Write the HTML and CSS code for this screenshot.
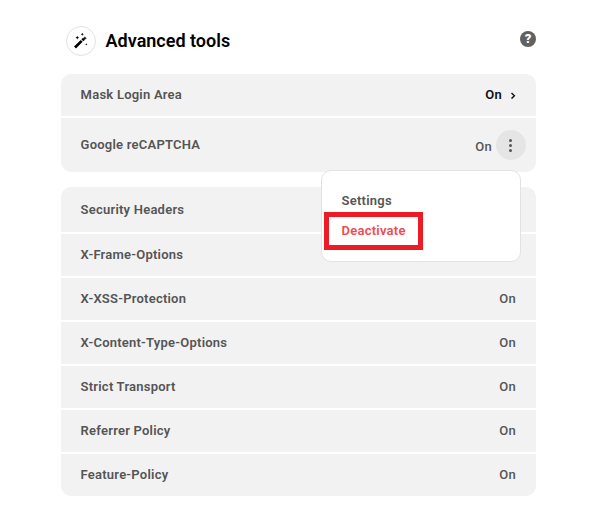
FILE: index.html
```html
<!DOCTYPE html>
<html lang="en">
<head>
<meta charset="utf-8">
<title>Advanced tools</title>
<link rel="stylesheet" href="styles.css">
</head>
<body>
<main class="panel">
  <header class="header">
    <span class="badge">
      <svg class="wand" width="16" height="18" viewBox="0 0 16 18"><path class="stick" d="M2 15.500 8.700 8.900M9.300 8.300 11 6.700"/><path d="M4.300 3.800l.6 1.300 1.300.6-1.300.6-.6 1.300-.6-1.300-1.300-.6 1.300-.6zM9.300.8l.5 1 1 .5-1 .5-.5 1-.5-1-1-.5 1-.5zM11.900 4.200l.6 1.400 1.400.6-1.400.6-.6 1.400-.6-1.400-1.400-.6 1.400-.6zM13.300 11.200l.35.750.75.350-.75.350-.35.750-.35-.75-.75-.35.750-.35z"/></svg>
    </span>
    <h1 class="title">Advanced tools</h1>
    <span class="help">?</span>
  </header>
  <section class="group">
    <div class="row">Mask Login Area
      <span class="state strong">On <svg class="chevron" width="6" height="8" viewBox="0 0 6 8"><path d="M1.500 2l2.900 2.800L1.500 7.600"/></svg></span>
    </div>
    <div class="row tall">Google reCAPTCHA
      <span class="state with-menu"><span class="lowered">On</span>
        <span class="more"><i></i><i></i><i></i></span>
      </span>
      <div class="menu"><span>Settings</span><span class="danger">Deactivate</span></div>
    </div>
  </section>
  <section class="group">
    <div class="row head">Security Headers</div>
    <div class="row">X-Frame-Options</div>
    <div class="row">X-XSS-Protection<span class="state">On</span></div>
    <div class="row">X-Content-Type-Options<span class="state">On</span></div>
    <div class="row">Strict Transport<span class="state">On</span></div>
    <div class="row">Referrer Policy<span class="state">On</span></div>
    <div class="row">Feature-Policy<span class="state">On</span></div>
  </section>
</main>
</body>
</html>
```
FILE: styles.css
```css
*, *::after { box-sizing: border-box; }
body { margin: 0; background: #fff; color: #555; font: 600 13px/18px Roboto, sans-serif; letter-spacing: .23px; }
.panel { width: 475px; margin-left: 61px; padding-top: 26px; }
.header { display: flex; align-items: center; height: 30px; padding-left: 5px; margin-bottom: 18px; }
.badge { display: flex; align-items: center; justify-content: center; width: 30px; height: 30px; border: 1px solid #e2e2e2; border-radius: 50%; }
.wand { fill: #000; }
.stick { fill: none; stroke: #000; stroke-width: 2.700; }
.title { margin: 0 auto 0 9.600px; color: #000; font-size: 18px; font-weight: 600; letter-spacing: 0; }
.help { width: 16px; height: 16px; margin-top: -4px; border-radius: 50%; background: #616161; color: #fff; font-size: 13px; font-weight: 900; line-height: 16px; letter-spacing: 0; text-align: center; }
.group { margin-bottom: 15px; }
.row { position: relative; display: flex; align-items: center; justify-content: space-between; height: 44px; padding: 0 20px 0 19.600px; background: #f2f2f2; border-bottom: 2px solid #fff; }
.row:first-child { border-radius: 10px 10px 0 0; }
.row:last-child { border-radius: 0 0 10px 10px; border-bottom: 0; height: 42px; }
.row:last-child.tall { height: 54px; }
.row.head { height: 47px; }
.state { font-weight: 500; }
.strong { color: #111; font-weight: 600; display: flex; align-items: center; gap: 8px; }
.chevron { fill: none; stroke: #111; stroke-width: 1.4; }
.with-menu { display: flex; align-items: center; gap: 4px; margin-right: -10px; }
.lowered { padding-top: 3px; }
.more { display: flex; flex-direction: column; align-items: center; justify-content: center; gap: 2px; width: 30px; height: 30px; padding-right: 1px; border-radius: 50%; background: #e5e5e5; }
.more i { width: 3px; height: 3px; border-radius: 50%; background: #555; }
.menu { position: absolute; z-index: 1; top: 52px; right: 15px; display: flex; flex-direction: column; align-items: flex-start; width: 200px; height: 92px; padding: 21px 19.600px; gap: 12px; border: 1px solid #e2e2e2; border-radius: 10px; background: #fff; }
.danger { position: relative; color: #f04a50; }
.danger::after { content: ""; position: absolute; left: -17.600px; top: -10px; width: 99px; height: 38px; border: 5px solid #ed1c24; }
```
